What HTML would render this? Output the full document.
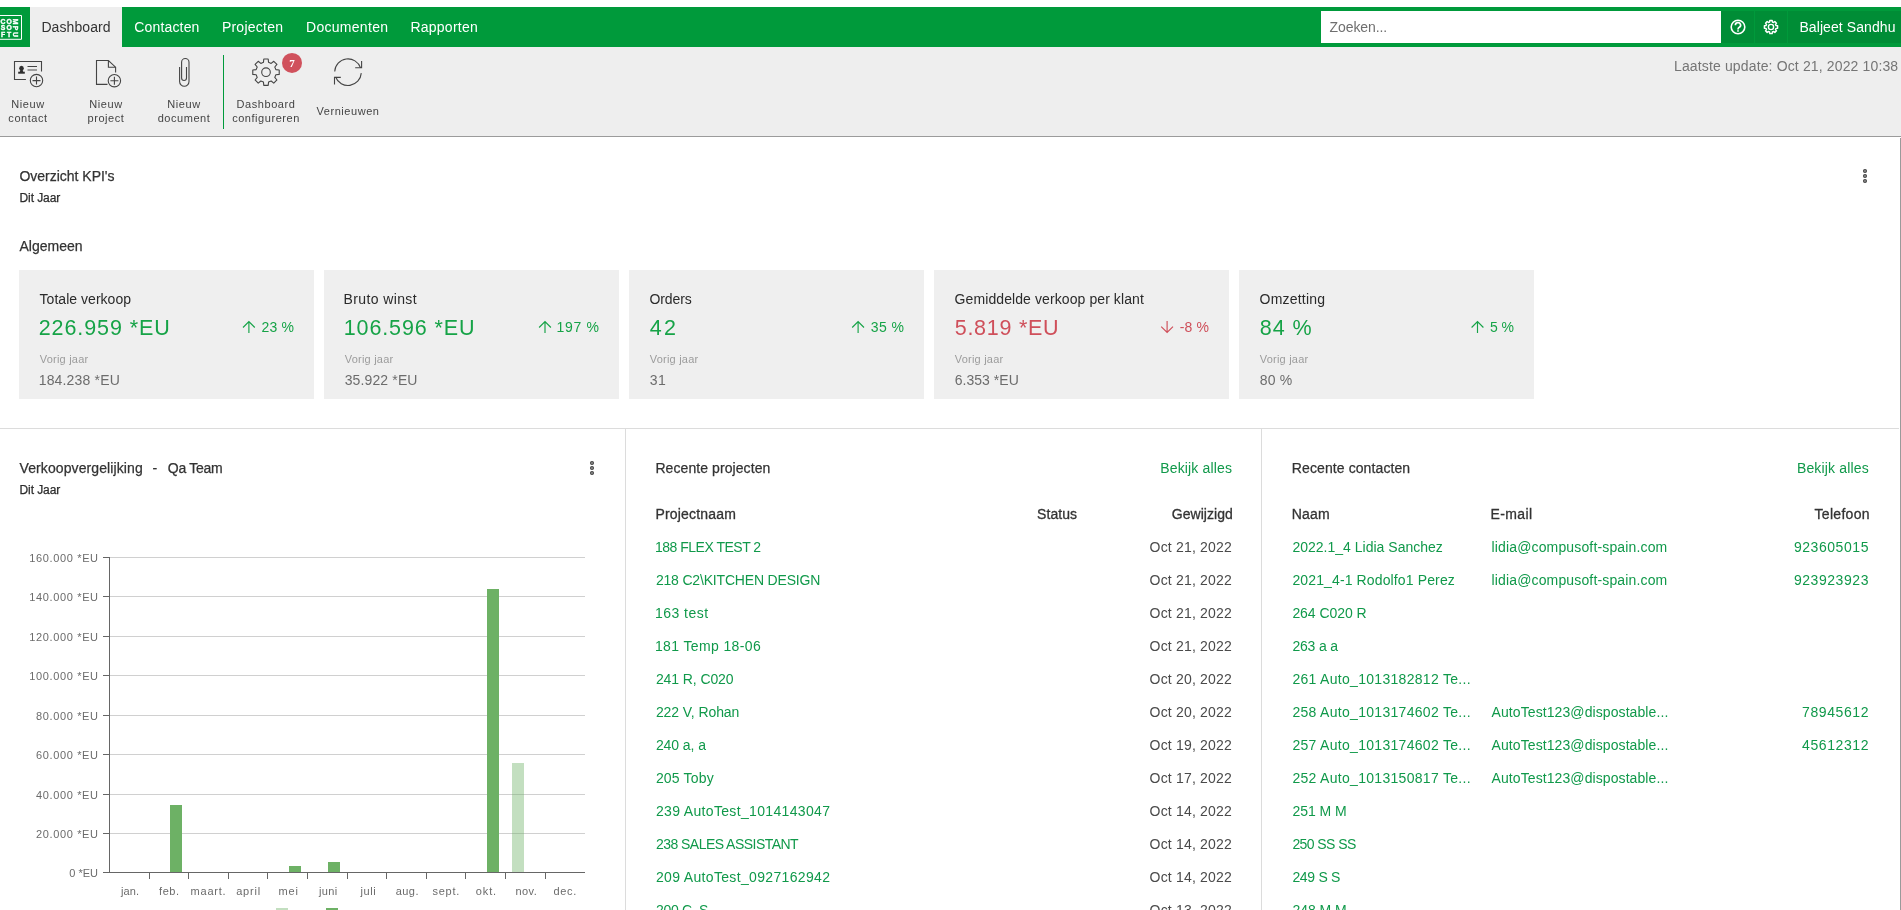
<!DOCTYPE html>
<html lang="nl">
<head>
<meta charset="utf-8">
<title>Dashboard</title>
<style>
*{box-sizing:border-box;margin:0;padding:0}
html,body{width:1901px;height:910px;overflow:hidden;background:#fff}
body{font-family:"Liberation Sans",sans-serif;font-size:14px;color:#333;position:relative;will-change:transform}
.abs{position:absolute;white-space:nowrap;line-height:1}
.x{position:absolute;white-space:pre}
#nav{position:absolute;left:0;top:7px;width:1901px;height:40px;background:#009a3b}
#tab{position:absolute;left:30px;top:0;width:92px;height:40px;background:#eeeeee}
#search{position:absolute;left:1321px;top:4px;width:400px;height:32px;background:#fff}
.btn{position:absolute;top:4px;height:32px;background:#008d36}
#tool{position:absolute;left:0;top:47px;width:1901px;height:90px;background:#eeeeee;border-bottom:1px solid #9b9b9b}
.tl{position:absolute;text-align:center;font-size:11px;line-height:14px;color:#444;white-space:nowrap;letter-spacing:0.55px}
#rb{position:absolute;left:1900px;top:138px;width:1px;height:772px;background:#9a9a9a}
.card{position:absolute;top:270px;width:295px;height:129px;background:#efefef}
.hl{position:absolute;height:1px;background:#dcdcdc}
.vl{position:absolute;width:1px;background:#dcdcdc}
</style>
</head>
<body>
<div id="nav">
  <div id="tab"></div>
  <div id="search"></div>
  <div class="btn" style="left:1721px;width:33px"></div>
  <div class="btn" style="left:1755px;width:32px"></div>
  <div class="btn" style="left:1788px;width:113px"></div>
</div>
<div id="tool">
  <div class="tl" style="left:0;width:56px;top:50px">Nieuw<br>contact</div>
  <div class="tl" style="left:78px;width:56px;top:50px">Nieuw<br>project</div>
  <div class="tl" style="left:148px;width:72px;top:50px">Nieuw<br>document</div>
  <div class="vl" style="left:223px;top:8px;height:74px;background:#009a3b"></div>
  <div class="tl" style="left:226px;width:80px;top:50px">Dashboard<br>configureren</div>
  <div class="tl" style="left:308px;width:80px;top:57px">Vernieuwen</div>
</div>
<div id="rb"></div>
<div class="card" style="left:19px"></div>
<div class="card" style="left:324px"></div>
<div class="card" style="left:629px"></div>
<div class="card" style="left:934px"></div>
<div class="card" style="left:1239px"></div>
<div class="hl" style="left:0;top:428px;width:1899px"></div>
<div class="vl" style="left:625px;top:429px;height:481px"></div>
<div class="vl" style="left:1261px;top:429px;height:481px"></div>
<svg class="abs" style="left:0;top:0" width="1901" height="47" viewBox="0 0 1901 47"><path d="M-1,15.5 H21.5 V39.3 H-1" stroke="#fff" fill="none" stroke-width="1"/><text x="3" y="23.7" font-family="Liberation Sans, sans-serif" font-weight="bold" font-size="6.8" fill="#fff" stroke="#fff" stroke-width="0.35" text-anchor="middle">C</text><text x="9.2" y="23.7" font-family="Liberation Sans, sans-serif" font-weight="bold" font-size="6.8" fill="#fff" stroke="#fff" stroke-width="0.35" text-anchor="middle">O</text><text x="3" y="30.1" font-family="Liberation Sans, sans-serif" font-weight="bold" font-size="6.8" fill="#fff" stroke="#fff" stroke-width="0.35" text-anchor="middle">S</text><text x="9.2" y="30.1" font-family="Liberation Sans, sans-serif" font-weight="bold" font-size="6.8" fill="#fff" stroke="#fff" stroke-width="0.35" text-anchor="middle">O</text><text x="3" y="36.7" font-family="Liberation Sans, sans-serif" font-weight="bold" font-size="6.8" fill="#fff" stroke="#fff" stroke-width="0.35" text-anchor="middle">F</text><text x="9.2" y="36.7" font-family="Liberation Sans, sans-serif" font-weight="bold" font-size="6.8" fill="#fff" stroke="#fff" stroke-width="0.35" text-anchor="middle">T</text><text x="0" y="2.2" transform="translate(15.5,21.5) rotate(90)" font-family="Liberation Sans, sans-serif" font-weight="bold" font-size="6.8" fill="#fff" stroke="#fff" stroke-width="0.35" text-anchor="middle">M</text><text x="0" y="2.2" transform="translate(15.5,27.9) rotate(90)" font-family="Liberation Sans, sans-serif" font-weight="bold" font-size="6.8" fill="#fff" stroke="#fff" stroke-width="0.35" text-anchor="middle">P</text><text x="0" y="2.2" transform="translate(15.5,34.5) rotate(90)" font-family="Liberation Sans, sans-serif" font-weight="bold" font-size="6.8" fill="#fff" stroke="#fff" stroke-width="0.35" text-anchor="middle">U</text><circle cx="1738" cy="27" r="6.8" stroke="#fff" fill="none" stroke-width="1.6"/><path d="M1735.4,25.2 a2.6,2.5 0 1 1 3.9,2.1 c-0.9,0.5 -1.3,1 -1.3,2.1" stroke="#fff" fill="none" stroke-width="1.7"/><rect x="1737.2" y="30.2" width="1.6" height="1.5" fill="#fff"/><path d="M1769.65,21.98 L1769.84,20.40 L1772.16,20.40 L1772.35,21.98 L1773.60,22.50 L1774.84,21.51 L1776.49,23.16 L1775.50,24.40 L1776.02,25.65 L1777.60,25.84 L1777.60,28.16 L1776.02,28.35 L1775.50,29.60 L1776.49,30.84 L1774.84,32.49 L1773.60,31.50 L1772.35,32.02 L1772.16,33.60 L1769.84,33.60 L1769.65,32.02 L1768.40,31.50 L1767.16,32.49 L1765.51,30.84 L1766.50,29.60 L1765.98,28.35 L1764.40,28.16 L1764.40,25.84 L1765.98,25.65 L1766.50,24.40 L1765.51,23.16 L1767.16,21.51 L1768.40,22.50Z" stroke="#fff" fill="none" stroke-width="1.45" stroke-linejoin="round"/><circle cx="1771" cy="27" r="2.6" stroke="#fff" fill="none" stroke-width="1.4"/></svg>
<svg class="abs" style="left:0;top:0" width="420" height="140" viewBox="0 0 420 140"><path d="M25.9,79.5 H14.5 V61.5 H41.5 V71.5" stroke="#444" stroke-width="1.1" fill="none" stroke-width="1.2"/><ellipse cx="21.5" cy="68.2" rx="2.3" ry="2.5" fill="#2e2e2e"/><path d="M20.4,70 h2.2 l0.6,2 h-3.4z" fill="#2e2e2e"/><rect x="18.2" y="71.7" width="6.6" height="2" fill="#2e2e2e"/><line x1="27.5" x2="37" y1="66.5" y2="66.5" stroke="#444" stroke-width="1"/><line x1="27.5" x2="37" y1="70" y2="70" stroke="#8a8a8a" stroke-width="1.6"/><circle cx="36.5" cy="80.6" r="6.2" stroke="#444" stroke-width="1.1" fill="none"/><path d="M32.5,80.6 h8 M36.5,76.6 v8" stroke="#444" stroke-width="1.1" fill="none"/><path d="M107.5,84.4 H96.5 V60.5 H108.4 L115.6,67.2 V72.6 M108.4,60.5 V67.2 H115.6" stroke="#444" stroke-width="1.1" fill="none" stroke-width="1.2"/><circle cx="114.4" cy="80.7" r="6.2" stroke="#444" stroke-width="1.1" fill="none"/><path d="M110.4,80.7 h8 M114.4,76.7 v8" stroke="#444" stroke-width="1.1" fill="none"/><path d="M179.6,67 V81.6 a4.7,4.7 0 0 0 9.4,0 V62.2 a3.7,3.7 0 0 0 -7.4,0 V78.1 a2.45,2.45 0 0 0 4.9,0 V67" stroke="#444" stroke-width="1.1" fill="none"/><path d="M263.45,62.32 L263.79,58.98 L268.21,58.98 L268.55,62.32 L271.18,63.41 L273.78,61.29 L276.91,64.42 L274.79,67.02 L275.88,69.65 L279.22,69.99 L279.22,74.41 L275.88,74.75 L274.79,77.38 L276.91,79.98 L273.78,83.11 L271.18,80.99 L268.55,82.08 L268.21,85.42 L263.79,85.42 L263.45,82.08 L260.82,80.99 L258.22,83.11 L255.09,79.98 L257.21,77.38 L256.12,74.75 L252.78,74.41 L252.78,69.99 L256.12,69.65 L257.21,67.02 L255.09,64.42 L258.22,61.29 L260.82,63.41Z" stroke="#444" stroke-width="1.1" fill="none" stroke-linejoin="round"/><circle cx="266" cy="72.2" r="4.3" stroke="#444" stroke-width="1.1" fill="none"/><circle cx="292" cy="62.9" r="10" fill="#d0515c"/><text x="292" y="66.6" text-anchor="middle" font-family="Liberation Serif, serif" font-weight="bold" font-size="11" fill="#fff">7</text><path d="M334.72,71.50 A13.3,13.3 0 0 1 360.58,67.87" stroke="#444" stroke-width="1.1" fill="none"/><path d="M355.2,67.8 H361.6 V61" stroke="#444" stroke-width="1.1" fill="none"/><path d="M361.27,73.13 A13.3,13.3 0 0 1 335.58,76.97" stroke="#444" stroke-width="1.1" fill="none"/><path d="M340.8,77.4 H334.5 V84.4" stroke="#444" stroke-width="1.1" fill="none"/></svg>
<svg class="abs" style="left:1860.00px;top:167.25px" width="10" height="18" viewBox="-5 -9 10 18"><g fill="#c4c4c4" stroke="#444" stroke-width="1.3"><circle cx="0" cy="-5" r="1.4"/><circle cx="0" cy="0" r="1.4"/><circle cx="0" cy="5" r="1.4"/></g></svg>
<svg class="abs" style="left:586.80px;top:459.20px" width="10" height="18" viewBox="-5 -9 10 18"><g fill="#c4c4c4" stroke="#444" stroke-width="1.3"><circle cx="0" cy="-5" r="1.4"/><circle cx="0" cy="0" r="1.4"/><circle cx="0" cy="5" r="1.4"/></g></svg>
<svg class="abs" style="left:0;top:540px" width="625" height="370" viewBox="0 540 625 370"><line x1="103" x2="110" y1="872.5" y2="872.5" stroke="#666" stroke-width="1"/><line x1="110" x2="585" y1="833.5" y2="833.5" stroke="#d0d0d0" stroke-width="1"/><line x1="103" x2="110" y1="833.5" y2="833.5" stroke="#666" stroke-width="1"/><line x1="110" x2="585" y1="794.5" y2="794.5" stroke="#d0d0d0" stroke-width="1"/><line x1="103" x2="110" y1="794.5" y2="794.5" stroke="#666" stroke-width="1"/><line x1="110" x2="585" y1="754.5" y2="754.5" stroke="#d0d0d0" stroke-width="1"/><line x1="103" x2="110" y1="754.5" y2="754.5" stroke="#666" stroke-width="1"/><line x1="110" x2="585" y1="715.5" y2="715.5" stroke="#d0d0d0" stroke-width="1"/><line x1="103" x2="110" y1="715.5" y2="715.5" stroke="#666" stroke-width="1"/><line x1="110" x2="585" y1="675.5" y2="675.5" stroke="#d0d0d0" stroke-width="1"/><line x1="103" x2="110" y1="675.5" y2="675.5" stroke="#666" stroke-width="1"/><line x1="110" x2="585" y1="636.5" y2="636.5" stroke="#d0d0d0" stroke-width="1"/><line x1="103" x2="110" y1="636.5" y2="636.5" stroke="#666" stroke-width="1"/><line x1="110" x2="585" y1="596.5" y2="596.5" stroke="#d0d0d0" stroke-width="1"/><line x1="103" x2="110" y1="596.5" y2="596.5" stroke="#666" stroke-width="1"/><line x1="110" x2="585" y1="557.5" y2="557.5" stroke="#d0d0d0" stroke-width="1"/><line x1="103" x2="110" y1="557.5" y2="557.5" stroke="#666" stroke-width="1"/><rect x="170" y="805" width="12" height="67" fill="#6db165"/><rect x="289" y="866" width="12" height="6" fill="#6db165"/><rect x="328" y="862" width="12" height="10" fill="#6db165"/><rect x="487" y="589" width="12" height="283" fill="#6db165"/><rect x="512" y="763" width="12" height="109" fill="rgba(109,177,101,0.41)"/><line x1="109.5" x2="109.5" y1="557" y2="873" stroke="#666" stroke-width="1"/><line x1="103" x2="585" y1="872.5" y2="872.5" stroke="#666" stroke-width="1"/><line x1="149.5" x2="149.5" y1="873" y2="879" stroke="#666" stroke-width="1"/><line x1="188.5" x2="188.5" y1="873" y2="879" stroke="#666" stroke-width="1"/><line x1="228.5" x2="228.5" y1="873" y2="879" stroke="#666" stroke-width="1"/><line x1="267.5" x2="267.5" y1="873" y2="879" stroke="#666" stroke-width="1"/><line x1="307.5" x2="307.5" y1="873" y2="879" stroke="#666" stroke-width="1"/><line x1="347.5" x2="347.5" y1="873" y2="879" stroke="#666" stroke-width="1"/><line x1="386.5" x2="386.5" y1="873" y2="879" stroke="#666" stroke-width="1"/><line x1="426.5" x2="426.5" y1="873" y2="879" stroke="#666" stroke-width="1"/><line x1="465.5" x2="465.5" y1="873" y2="879" stroke="#666" stroke-width="1"/><line x1="505.5" x2="505.5" y1="873" y2="879" stroke="#666" stroke-width="1"/><line x1="545.5" x2="545.5" y1="873" y2="879" stroke="#666" stroke-width="1"/><rect x="276" y="908" width="12" height="4" fill="rgba(109,177,101,0.41)"/><rect x="326" y="908" width="12" height="4" fill="#6db165"/></svg>
<svg class="abs" style="left:0;top:315px" width="1901" height="24" viewBox="0 315 1901 24"><path d="M248.9,333 V321.6 M243.0,327.5 L248.9,321.6 L254.8,327.5" stroke="#16a347" stroke-width="1.15" fill="none"/><path d="M545.0,333 V321.6 M539.1,327.5 L545.0,321.6 L550.9,327.5" stroke="#16a347" stroke-width="1.15" fill="none"/><path d="M858.1,333 V321.6 M852.2,327.5 L858.1,321.6 L864.0,327.5" stroke="#16a347" stroke-width="1.15" fill="none"/><path d="M1167.1,321 V332.5 M1161.2,326.6 L1167.1,332.5 L1173.0,326.6" stroke="#cf4f5a" stroke-width="1.15" fill="none"/><path d="M1477.5,333 V321.6 M1471.6,327.5 L1477.5,321.6 L1483.4,327.5" stroke="#16a347" stroke-width="1.15" fill="none"/></svg>
<div class="x" style="left:41.4px;top:20.0px;font-size:14px;line-height:14px;color:#333;letter-spacing:0.09px;">Dashboard</div>
<div class="x" style="left:134.3px;top:20.0px;font-size:14px;line-height:14px;color:#fff;letter-spacing:0.16px;">Contacten</div>
<div class="x" style="left:221.9px;top:20.0px;font-size:14px;line-height:14px;color:#fff;letter-spacing:0.24px;">Projecten</div>
<div class="x" style="left:306.0px;top:20.0px;font-size:14px;line-height:14px;color:#fff;letter-spacing:0.29px;">Documenten</div>
<div class="x" style="left:410.4px;top:20.0px;font-size:14px;line-height:14px;color:#fff;letter-spacing:0.25px;">Rapporten</div>
<div class="x" style="left:1329.5px;top:20.0px;font-size:14px;line-height:14px;color:#6f6f6f;letter-spacing:-0.08px;">Zoeken...</div>
<div class="x" style="left:1799.4px;top:20.0px;font-size:14px;line-height:14px;color:#fff;letter-spacing:0.09px;">Baljeet Sandhu</div>
<div class="x" style="left:1674.0px;top:58.9px;font-size:14px;line-height:14px;color:#757575;letter-spacing:0.14px;">Laatste update: Oct 21, 2022 10:38</div>
<div class="x" style="left:19.5px;top:168.9px;font-size:14px;line-height:14px;color:#333;letter-spacing:-0.02px;-webkit-text-stroke:0.25px #333;">Overzicht KPI's</div>
<div class="x" style="left:19.5px;top:192.4px;font-size:12px;line-height:12px;color:#2c2c2c;letter-spacing:-0.08px;-webkit-text-stroke:0.25px #2c2c2c;">Dit Jaar</div>
<div class="x" style="left:19.5px;top:239.1px;font-size:14px;line-height:14px;color:#333;letter-spacing:-0.01px;-webkit-text-stroke:0.25px #333;">Algemeen</div>
<div class="x" style="left:19.5px;top:460.8px;font-size:14px;line-height:14px;color:#333;letter-spacing:0.1px;-webkit-text-stroke:0.25px #333;">Verkoopvergelijking</div>
<div class="x" style="left:152.4px;top:460.8px;font-size:14px;line-height:14px;color:#333;-webkit-text-stroke:0.25px #333;">-</div>
<div class="x" style="left:167.8px;top:460.8px;font-size:14px;line-height:14px;color:#333;letter-spacing:-0.26px;-webkit-text-stroke:0.25px #333;">Qa Team</div>
<div class="x" style="left:19.5px;top:484.0px;font-size:12px;line-height:12px;color:#2c2c2c;letter-spacing:-0.08px;-webkit-text-stroke:0.25px #2c2c2c;">Dit Jaar</div>
<div class="x" style="left:39.6px;top:292.1px;font-size:14px;line-height:14px;color:#2a2a2a;letter-spacing:0.03px;">Totale verkoop</div>
<div class="x" style="left:38.7px;top:317.8px;font-size:21.5px;line-height:21.5px;color:#16a347;letter-spacing:0.92px;">226.959 *EU</div>
<div class="x" style="left:261.5px;top:319.9px;font-size:14px;line-height:14px;color:#16a347;letter-spacing:0.15px;">23 %</div>
<div class="x" style="left:39.7px;top:353.9px;font-size:11px;line-height:11px;color:#9c9c9c;letter-spacing:0.23px;">Vorig jaar</div>
<div class="x" style="left:38.7px;top:372.7px;font-size:14px;line-height:14px;color:#6c6c6c;letter-spacing:0.17px;">184.238 *EU</div>
<div class="x" style="left:343.6px;top:292.1px;font-size:14px;line-height:14px;color:#2a2a2a;letter-spacing:0.37px;">Bruto winst</div>
<div class="x" style="left:343.7px;top:317.8px;font-size:21.5px;line-height:21.5px;color:#16a347;letter-spacing:0.89px;">106.596 *EU</div>
<div class="x" style="left:556.6px;top:319.9px;font-size:14px;line-height:14px;color:#16a347;letter-spacing:0.64px;">197 %</div>
<div class="x" style="left:344.7px;top:353.9px;font-size:11px;line-height:11px;color:#9c9c9c;letter-spacing:0.23px;">Vorig jaar</div>
<div class="x" style="left:344.7px;top:372.7px;font-size:14px;line-height:14px;color:#6c6c6c;letter-spacing:0.13px;">35.922 *EU</div>
<div class="x" style="left:649.6px;top:292.1px;font-size:14px;line-height:14px;color:#2a2a2a;letter-spacing:-0.14px;">Orders</div>
<div class="x" style="left:649.7px;top:317.8px;font-size:21.5px;line-height:21.5px;color:#16a347;letter-spacing:2.24px;">42</div>
<div class="x" style="left:870.7px;top:319.9px;font-size:14px;line-height:14px;color:#16a347;letter-spacing:0.41px;">35 %</div>
<div class="x" style="left:649.7px;top:353.9px;font-size:11px;line-height:11px;color:#9c9c9c;letter-spacing:0.23px;">Vorig jaar</div>
<div class="x" style="left:649.7px;top:372.7px;font-size:14px;line-height:14px;color:#6c6c6c;letter-spacing:0.41px;">31</div>
<div class="x" style="left:954.6px;top:292.1px;font-size:14px;line-height:14px;color:#2a2a2a;letter-spacing:0.09px;">Gemiddelde verkoop per klant</div>
<div class="x" style="left:954.7px;top:317.8px;font-size:21.5px;line-height:21.5px;color:#cf4f5a;letter-spacing:0.74px;">5.819 *EU</div>
<div class="x" style="left:1179.7px;top:319.9px;font-size:14px;line-height:14px;color:#cf4f5a;letter-spacing:0.12px;">-8 %</div>
<div class="x" style="left:954.7px;top:353.9px;font-size:11px;line-height:11px;color:#9c9c9c;letter-spacing:0.23px;">Vorig jaar</div>
<div class="x" style="left:954.7px;top:372.7px;font-size:14px;line-height:14px;color:#6c6c6c;letter-spacing:0.04px;">6.353 *EU</div>
<div class="x" style="left:1259.6px;top:292.1px;font-size:14px;line-height:14px;color:#2a2a2a;letter-spacing:0.2px;">Omzetting</div>
<div class="x" style="left:1259.7px;top:317.8px;font-size:21.5px;line-height:21.5px;color:#16a347;letter-spacing:1.0px;">84 %</div>
<div class="x" style="left:1490.1px;top:319.9px;font-size:14px;line-height:14px;color:#16a347;letter-spacing:-0.19px;">5 %</div>
<div class="x" style="left:1259.7px;top:353.9px;font-size:11px;line-height:11px;color:#9c9c9c;letter-spacing:0.23px;">Vorig jaar</div>
<div class="x" style="left:1259.7px;top:372.7px;font-size:14px;line-height:14px;color:#6c6c6c;letter-spacing:0.21px;">80 %</div>
<div class="x" style="left:655.4px;top:461.2px;font-size:14px;line-height:14px;color:#333;letter-spacing:0.08px;-webkit-text-stroke:0.25px #333;">Recente projecten</div>
<div class="x" style="left:1160.2px;top:461.2px;font-size:14px;line-height:14px;color:#10994a;letter-spacing:0.16px;">Bekijk alles</div>
<div class="x" style="left:655.5px;top:507.4px;font-size:14px;line-height:14px;color:#333;letter-spacing:0.17px;-webkit-text-stroke:0.3px #333;">Projectnaam</div>
<div class="x" style="left:1037.1px;top:507.4px;font-size:14px;line-height:14px;color:#333;letter-spacing:0.06px;-webkit-text-stroke:0.3px #333;">Status</div>
<div class="x" style="left:1171.8px;top:507.4px;font-size:14px;line-height:14px;color:#333;letter-spacing:0.04px;-webkit-text-stroke:0.3px #333;">Gewijzigd</div>
<div class="x" style="left:654.9px;top:540.0px;font-size:14px;line-height:14px;color:#10994a;letter-spacing:-0.49px;">188 FLEX TEST 2</div>
<div class="x" style="left:1149.6px;top:540.0px;font-size:14px;line-height:14px;color:#4a4a4a;letter-spacing:0.18px;">Oct 21, 2022</div>
<div class="x" style="left:655.9px;top:573.0px;font-size:14px;line-height:14px;color:#10994a;letter-spacing:-0.18px;">218 C2\KITCHEN DESIGN</div>
<div class="x" style="left:1149.6px;top:573.0px;font-size:14px;line-height:14px;color:#4a4a4a;letter-spacing:0.18px;">Oct 21, 2022</div>
<div class="x" style="left:654.9px;top:606.0px;font-size:14px;line-height:14px;color:#10994a;letter-spacing:0.48px;">163 test</div>
<div class="x" style="left:1149.6px;top:606.0px;font-size:14px;line-height:14px;color:#4a4a4a;letter-spacing:0.18px;">Oct 21, 2022</div>
<div class="x" style="left:654.9px;top:639.0px;font-size:14px;line-height:14px;color:#10994a;letter-spacing:0.38px;">181 Temp 18-06</div>
<div class="x" style="left:1149.6px;top:639.0px;font-size:14px;line-height:14px;color:#4a4a4a;letter-spacing:0.18px;">Oct 21, 2022</div>
<div class="x" style="left:655.9px;top:672.0px;font-size:14px;line-height:14px;color:#10994a;letter-spacing:-0.09px;">241 R, C020</div>
<div class="x" style="left:1149.6px;top:672.0px;font-size:14px;line-height:14px;color:#4a4a4a;letter-spacing:0.18px;">Oct 20, 2022</div>
<div class="x" style="left:655.9px;top:705.0px;font-size:14px;line-height:14px;color:#10994a;letter-spacing:-0.08px;">222 V, Rohan</div>
<div class="x" style="left:1149.6px;top:705.0px;font-size:14px;line-height:14px;color:#4a4a4a;letter-spacing:0.18px;">Oct 20, 2022</div>
<div class="x" style="left:655.9px;top:738.0px;font-size:14px;line-height:14px;color:#10994a;letter-spacing:-0.07px;">240 a, a</div>
<div class="x" style="left:1149.6px;top:738.0px;font-size:14px;line-height:14px;color:#4a4a4a;letter-spacing:0.18px;">Oct 19, 2022</div>
<div class="x" style="left:655.9px;top:771.0px;font-size:14px;line-height:14px;color:#10994a;letter-spacing:0.18px;">205 Toby</div>
<div class="x" style="left:1149.6px;top:771.0px;font-size:14px;line-height:14px;color:#4a4a4a;letter-spacing:0.18px;">Oct 17, 2022</div>
<div class="x" style="left:655.9px;top:804.0px;font-size:14px;line-height:14px;color:#10994a;letter-spacing:0.34px;">239 AutoTest_1014143047</div>
<div class="x" style="left:1149.6px;top:804.0px;font-size:14px;line-height:14px;color:#4a4a4a;letter-spacing:0.18px;">Oct 14, 2022</div>
<div class="x" style="left:655.9px;top:837.0px;font-size:14px;line-height:14px;color:#10994a;letter-spacing:-0.53px;">238 SALES ASSISTANT</div>
<div class="x" style="left:1149.6px;top:837.0px;font-size:14px;line-height:14px;color:#4a4a4a;letter-spacing:0.18px;">Oct 14, 2022</div>
<div class="x" style="left:655.9px;top:870.0px;font-size:14px;line-height:14px;color:#10994a;letter-spacing:0.34px;">209 AutoTest_0927162942</div>
<div class="x" style="left:1149.6px;top:870.0px;font-size:14px;line-height:14px;color:#4a4a4a;letter-spacing:0.18px;">Oct 14, 2022</div>
<div class="x" style="left:655.9px;top:903.0px;font-size:14px;line-height:14px;color:#10994a;letter-spacing:-0.29px;">200 C, S</div>
<div class="x" style="left:1149.6px;top:903.0px;font-size:14px;line-height:14px;color:#4a4a4a;letter-spacing:0.18px;">Oct 13, 2022</div>
<div class="x" style="left:1291.8px;top:461.2px;font-size:14px;line-height:14px;color:#333;letter-spacing:0.1px;-webkit-text-stroke:0.25px #333;">Recente contacten</div>
<div class="x" style="left:1796.9px;top:461.2px;font-size:14px;line-height:14px;color:#10994a;letter-spacing:0.16px;">Bekijk alles</div>
<div class="x" style="left:1291.8px;top:507.4px;font-size:14px;line-height:14px;color:#333;letter-spacing:0.14px;-webkit-text-stroke:0.3px #333;">Naam</div>
<div class="x" style="left:1490.5px;top:507.4px;font-size:14px;line-height:14px;color:#333;letter-spacing:0.39px;-webkit-text-stroke:0.3px #333;">E-mail</div>
<div class="x" style="left:1814.6px;top:507.4px;font-size:14px;line-height:14px;color:#333;letter-spacing:0.28px;-webkit-text-stroke:0.3px #333;">Telefoon</div>
<div class="x" style="left:1292.4px;top:540.0px;font-size:14px;line-height:14px;color:#10994a;letter-spacing:0.01px;">2022.1_4 Lidia Sanchez</div>
<div class="x" style="left:1491.5px;top:540.0px;font-size:14px;line-height:14px;color:#10994a;letter-spacing:0.15px;">lidia@compusoft-spain.com</div>
<div class="x" style="left:1793.9px;top:540.0px;font-size:14px;line-height:14px;color:#10994a;letter-spacing:0.56px;">923605015</div>
<div class="x" style="left:1292.4px;top:573.0px;font-size:14px;line-height:14px;color:#10994a;letter-spacing:0.13px;">2021_4-1 Rodolfo1 Perez</div>
<div class="x" style="left:1491.5px;top:573.0px;font-size:14px;line-height:14px;color:#10994a;letter-spacing:0.15px;">lidia@compusoft-spain.com</div>
<div class="x" style="left:1793.9px;top:573.0px;font-size:14px;line-height:14px;color:#10994a;letter-spacing:0.56px;">923923923</div>
<div class="x" style="left:1292.4px;top:606.0px;font-size:14px;line-height:14px;color:#10994a;letter-spacing:-0.06px;">264 C020 R</div>
<div class="x" style="left:1292.4px;top:639.0px;font-size:14px;line-height:14px;color:#10994a;letter-spacing:-0.19px;">263 a a</div>
<div class="x" style="left:1292.4px;top:672.0px;font-size:14px;line-height:14px;color:#10994a;letter-spacing:0.3px;">261 Auto_1013182812 Te...</div>
<div class="x" style="left:1292.4px;top:705.0px;font-size:14px;line-height:14px;color:#10994a;letter-spacing:0.3px;">258 Auto_1013174602 Te...</div>
<div class="x" style="left:1491.5px;top:705.0px;font-size:14px;line-height:14px;color:#10994a;letter-spacing:0.09px;">AutoTest123@dispostable...</div>
<div class="x" style="left:1802.0px;top:705.0px;font-size:14px;line-height:14px;color:#10994a;letter-spacing:0.6px;">78945612</div>
<div class="x" style="left:1292.4px;top:738.0px;font-size:14px;line-height:14px;color:#10994a;letter-spacing:0.3px;">257 Auto_1013174602 Te...</div>
<div class="x" style="left:1491.5px;top:738.0px;font-size:14px;line-height:14px;color:#10994a;letter-spacing:0.09px;">AutoTest123@dispostable...</div>
<div class="x" style="left:1802.0px;top:738.0px;font-size:14px;line-height:14px;color:#10994a;letter-spacing:0.6px;">45612312</div>
<div class="x" style="left:1292.4px;top:771.0px;font-size:14px;line-height:14px;color:#10994a;letter-spacing:0.3px;">252 Auto_1013150817 Te...</div>
<div class="x" style="left:1491.5px;top:771.0px;font-size:14px;line-height:14px;color:#10994a;letter-spacing:0.09px;">AutoTest123@dispostable...</div>
<div class="x" style="left:1292.4px;top:804.0px;font-size:14px;line-height:14px;color:#10994a;letter-spacing:-0.03px;">251 M M</div>
<div class="x" style="left:1292.4px;top:837.0px;font-size:14px;line-height:14px;color:#10994a;letter-spacing:-0.58px;">250 SS SS</div>
<div class="x" style="left:1292.4px;top:870.0px;font-size:14px;line-height:14px;color:#10994a;letter-spacing:-0.31px;">249 S S</div>
<div class="x" style="left:1292.4px;top:903.0px;font-size:14px;line-height:14px;color:#10994a;letter-spacing:-0.03px;">248 M M</div>
<div class="x" style="left:69.3px;top:867.5px;font-size:11px;line-height:11px;color:#6b6b6b;">0 *EU</div>
<div class="x" style="left:35.9px;top:828.5px;font-size:11px;line-height:11px;color:#6b6b6b;letter-spacing:0.65px;">20.000 *EU</div>
<div class="x" style="left:35.9px;top:789.5px;font-size:11px;line-height:11px;color:#6b6b6b;letter-spacing:0.65px;">40.000 *EU</div>
<div class="x" style="left:35.9px;top:749.5px;font-size:11px;line-height:11px;color:#6b6b6b;letter-spacing:0.65px;">60.000 *EU</div>
<div class="x" style="left:35.9px;top:710.5px;font-size:11px;line-height:11px;color:#6b6b6b;letter-spacing:0.65px;">80.000 *EU</div>
<div class="x" style="left:29.2px;top:670.5px;font-size:11px;line-height:11px;color:#6b6b6b;letter-spacing:0.65px;">100.000 *EU</div>
<div class="x" style="left:29.2px;top:631.5px;font-size:11px;line-height:11px;color:#6b6b6b;letter-spacing:0.65px;">120.000 *EU</div>
<div class="x" style="left:29.2px;top:591.5px;font-size:11px;line-height:11px;color:#6b6b6b;letter-spacing:0.65px;">140.000 *EU</div>
<div class="x" style="left:29.2px;top:552.5px;font-size:11px;line-height:11px;color:#6b6b6b;letter-spacing:0.65px;">160.000 *EU</div>
<div class="x" style="left:120.9px;top:885.5px;font-size:11px;line-height:11px;color:#6b6b6b;letter-spacing:0.14px;">jan.</div>
<div class="x" style="left:159.0px;top:885.5px;font-size:11px;line-height:11px;color:#6b6b6b;letter-spacing:0.57px;">feb.</div>
<div class="x" style="left:190.6px;top:885.5px;font-size:11px;line-height:11px;color:#6b6b6b;letter-spacing:0.78px;">maart.</div>
<div class="x" style="left:236.2px;top:885.5px;font-size:11px;line-height:11px;color:#6b6b6b;letter-spacing:0.81px;">april</div>
<div class="x" style="left:278.5px;top:885.5px;font-size:11px;line-height:11px;color:#6b6b6b;letter-spacing:0.81px;">mei</div>
<div class="x" style="left:318.9px;top:885.5px;font-size:11px;line-height:11px;color:#6b6b6b;letter-spacing:0.41px;">juni</div>
<div class="x" style="left:360.5px;top:885.5px;font-size:11px;line-height:11px;color:#6b6b6b;letter-spacing:0.6px;">juli</div>
<div class="x" style="left:395.7px;top:885.5px;font-size:11px;line-height:11px;color:#6b6b6b;letter-spacing:0.45px;">aug.</div>
<div class="x" style="left:432.5px;top:885.5px;font-size:11px;line-height:11px;color:#6b6b6b;letter-spacing:0.75px;">sept.</div>
<div class="x" style="left:475.7px;top:885.5px;font-size:11px;line-height:11px;color:#6b6b6b;letter-spacing:0.91px;">okt.</div>
<div class="x" style="left:515.6px;top:885.5px;font-size:11px;line-height:11px;color:#6b6b6b;letter-spacing:0.39px;">nov.</div>
<div class="x" style="left:553.5px;top:885.5px;font-size:11px;line-height:11px;color:#6b6b6b;letter-spacing:0.65px;">dec.</div>
</body>
</html>
